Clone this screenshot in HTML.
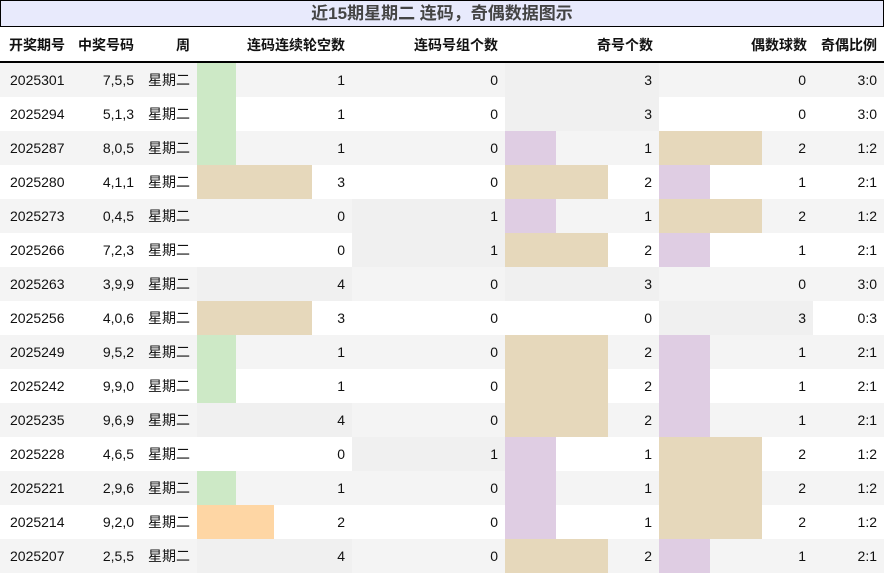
<!DOCTYPE html>
<html><head><meta charset="utf-8"><style>
*{margin:0;padding:0;box-sizing:border-box}
body{width:884px;height:574px;background:#fff;font-family:"Liberation Sans","Noto Sans CJK SC",sans-serif;font-size:14px;color:#111;position:relative;overflow:hidden}
.title{position:absolute;left:0;top:0;width:884px;height:27px;background:#e8eafc;border:1px solid #000;text-align:center;font-weight:bold;font-size:17px;color:#444;line-height:26px}
.hdr{position:absolute;top:27px;left:0;width:884px;height:36px;border-bottom:2px solid #000;font-weight:bold;font-size:14px}
.hdr div{position:absolute;top:0;line-height:36px;text-align:right}
.row{position:absolute;left:0;width:884px;height:34px}
.row div{position:absolute;top:0;height:34px;line-height:34px}
.c{text-align:right}
</style></head><body>
<div class="title">近15期星期二 连码，奇偶数据图示</div>
<div class="hdr">
<div style="left:0;width:65px">开奖期号</div>
<div style="left:70;width:64px;left:70px">中奖号码</div>
<div style="left:140px;width:50px">周</div>
<div style="left:197px;width:148px">连码连续轮空数</div>
<div style="left:352px;width:146px">连码号组个数</div>
<div style="left:505px;width:148px">奇号个数</div>
<div style="left:659px;width:148px">偶数球数</div>
<div style="left:813px;width:64px">奇偶比例</div>
</div>
<div id="rows"></div>
<script>
var d=[["2025301","7,5,5",1,0,3,0,"3:0"],["2025294","5,1,3",1,0,3,0,"3:0"],["2025287","8,0,5",1,0,1,2,"1:2"],["2025280","4,1,1",3,0,2,1,"2:1"],["2025273","0,4,5",0,1,1,2,"1:2"],["2025266","7,2,3",0,1,2,1,"2:1"],["2025263","3,9,9",4,0,3,0,"3:0"],["2025256","4,0,6",3,0,0,3,"0:3"],["2025249","9,5,2",1,0,2,1,"2:1"],["2025242","9,9,0",1,0,2,1,"2:1"],["2025235","9,6,9",4,0,2,1,"2:1"],["2025228","4,6,5",0,1,1,2,"1:2"],["2025221","2,9,6",1,0,1,2,"1:2"],["2025214","9,2,0",2,0,1,2,"1:2"],["2025207","2,5,5",4,0,2,1,"2:1"]];
var G="#f0f0f0",T="#e6d8bb",P="#dfcde3";
function bar(x,v,t){var w=0,c="";
if(t==0){if(v==1){w=39;c="#cde9c6"}else if(v==2){w=77;c="#fed6a4"}else if(v==3){w=115;c=T}else if(v==4){w=155;c=G}}
else if(t==1){if(v==1){w=153;c=G}}
else{if(v==1){w=51;c=P}else if(v==2){w=103;c=T}else if(v==3){w=154;c=G}}
return w?'<div style="left:'+x+'px;width:'+w+'px;background:'+c+'"></div>':'';}
var h="";
d.forEach(function(r,i){
h+='<div class="row" style="top:'+(63+i*34)+'px;background:'+(i%2==0?"#f4f4f4":"#fff")+'">';
h+=bar(197,r[2],0)+bar(352,r[3],1)+bar(505,r[4],2)+bar(659,r[5],2);
h+='<div style="left:10px">'+r[0]+'</div>';
h+='<div class="c" style="left:70px;width:64px">'+r[1]+'</div>';
h+='<div style="left:148px">星期二</div>';
h+='<div class="c" style="left:197px;width:148px">'+r[2]+'</div>';
h+='<div class="c" style="left:352px;width:146px">'+r[3]+'</div>';
h+='<div class="c" style="left:505px;width:147px">'+r[4]+'</div>';
h+='<div class="c" style="left:659px;width:147px">'+r[5]+'</div>';
h+='<div class="c" style="left:813px;width:64px">'+r[6]+'</div>';
h+='</div>';});
document.getElementById("rows").innerHTML=h;
</script>
</body></html>
